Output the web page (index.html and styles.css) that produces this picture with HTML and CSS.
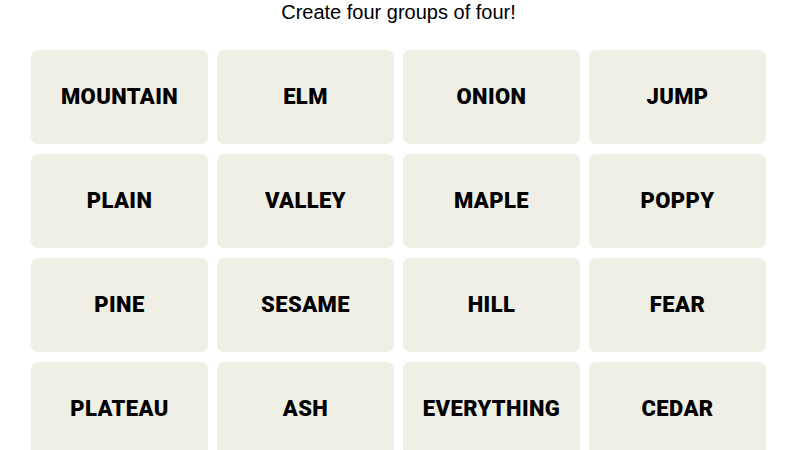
FILE: index.html
```html
<!DOCTYPE html>
<html>
<head>
<meta charset="utf-8">
<link rel="stylesheet" href="styles.css">
</head>
<body>
<div class="page">
  <h1 class="title">Create four groups of four!</h1>
  <div class="board">
    <div class="tile">MOUNTAIN</div>
    <div class="tile">ELM</div>
    <div class="tile">ONION</div>
    <div class="tile">JUMP</div>
    <div class="tile">PLAIN</div>
    <div class="tile">VALLEY</div>
    <div class="tile">MAPLE</div>
    <div class="tile">POPPY</div>
    <div class="tile">PINE</div>
    <div class="tile">SESAME</div>
    <div class="tile">HILL</div>
    <div class="tile">FEAR</div>
    <div class="tile">PLATEAU</div>
    <div class="tile">ASH</div>
    <div class="tile">EVERYTHING</div>
    <div class="tile">CEDAR</div>
  </div>
</div>
</body>
</html>
```
FILE: styles.css
```css
html, body {
  margin: 0;
  padding: 0;
  background: #ffffff;
  overflow: hidden;
}
.page {
  width: 735px;
  margin-left: 31px;
  font-family: "Liberation Sans", Arial, sans-serif;
  color: #000;
}
.title {
  margin: 0;
  font-size: 20px;
  font-weight: 400;
  line-height: 24px;
  text-align: center;
  color: #000;
}
.board {
  margin-top: 26px;
  display: grid;
  grid-template-columns: repeat(4, 177px);
  grid-auto-rows: 94px;
  column-gap: 9px;
  row-gap: 10px;
}
.tile {
  background: #efefe6;
  border-radius: 7px;
  display: flex;
  align-items: center;
  justify-content: center;
  font-family: Roboto, "Liberation Sans", sans-serif;
  font-weight: 900;
  font-size: 22px;
  letter-spacing: 0.4px;
  text-transform: uppercase;
  padding-bottom: 2px;
}
```
